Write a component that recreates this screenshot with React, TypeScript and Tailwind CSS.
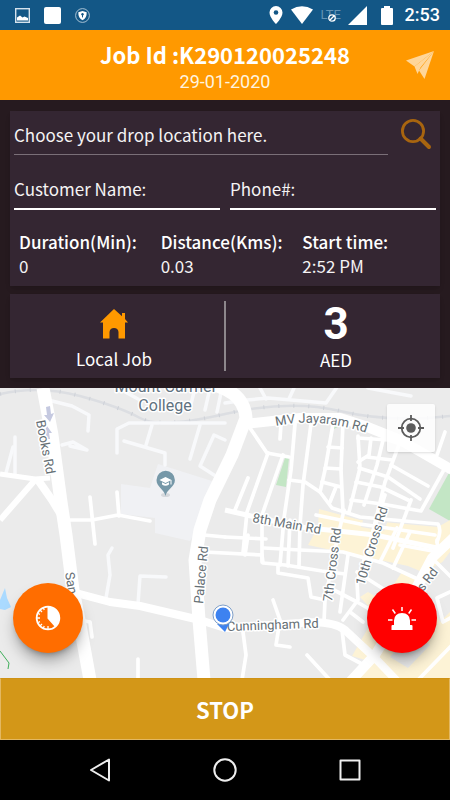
import React, { useState } from 'react';

const font = "font-['Noto_Sans_CJK_SC','Open_Sans',sans-serif]";

const mainRoads = [
  { d: 'M43 388 L52 435 L61 502 L66 535 L73 590 L80 625 L90 680', w: 13 },
  { d: 'M200 382 Q244 388 246 418 L232 455 L210 500 L200 530 L195 560 L199 620 L204 680', w: 13 },
  { d: 'M244 424 L300 418 L340 418 L365 426 L400 440 L452 470', w: 10 },
  { d: 'M76 593 L110 602 L140 606 L200 620 L225 628 L300 623 Q332 620 345 630 L375 658 L398 682', w: 8 },
  { d: 'M454 537 L432 558 L415 590 L375 655 L348 684', w: 10 },
  { d: 'M0 474 L35 479 L50 478', w: 5 },
  { d: 'M35 480 L0 520', w: 6 },
  { d: 'M38 480 L52 500 L63 518', w: 8 },
  { d: 'M225 510 L260 518 L300 527 L375 535 L437 548', w: 5 },
];

const streets = [
  'M70 520 L92 520 L118 515 L150 521',
  'M90 497 L95 544',
  'M117 492 L119 516',
  'M138 659 L138 680',
  'M204 535 L225 537',
  'M204 552 L262 555 L263 563 L285 565 L322 571 L345 574',
  'M85 621 L90 622 L92 637',
  'M250 428 L267 453 L289 457',
  'M268 453 L247 512 L243 553',
  'M248 478 L235 510',
  'M283 455 L262 515 L262 562',
  'M295 424 L291 470 L284 518 L280 565',
  'M311 424 L303 485 L300 525 L299 566',
  'M333 424 L325 470 L320 492',
  'M343 422 L341 470 L343 512',
  'M281 424 L280 439',
  'M328 447 L342 448',
  'M325 468 L341 469',
  'M322 482 L341 487',
  'M289 480 L305 482 L320 492 L332 508 L360 517 L438 524 Q442 530 437 542',
  'M336 487 L330 502',
  'M358 436 L360 468 L349 512',
  'M358 438 L388 440 L400 444',
  'M371 438 L369 455 L358 462',
  'M383 440 L377 465 L364 505',
  'M400 442 L385 482 L372 535',
  'M367 457 L392 460',
  'M359 468 L388 477 L420 499',
  'M391 465 L428 486',
  'M356 482 L381 487 L408 500',
  'M351 500 L382 504 L421 511 L446 466',
  'M411 500 L393 548',
  'M445 432 L437 455',
  'M316 515 L360 524 L435 535',
  'M264 548 L300 550 L343 552 L383 563 L424 582',
  'M225 537 L266 539',
  'M278 566 L278 573 L308 578 L311 597 L325 600 L324 622',
  'M290 520 L288 566',
  'M248 535 L245 555',
  'M344 510 L336 545 L325 600',
  'M348 555 L340 612',
  'M385 495 L357 582 L358 600 L343 620',
  'M397 528 L380 562',
  'M410 532 L393 568',
  'M330 588 L357 602 L378 614',
  'M350 612 L363 622',
  'M357 572 L385 590 L400 605',
  'M342 630 L345 655 L362 664',
  'M307 655 L330 680',
  'M437 540 L438 552 L400 545',
  'M450 592 L437 598 L443 622 L450 618',
  'M434 560 L452 578',
  'M452 645 L418 680',
  'M376 655 L395 625',
  'M273 600 L280 620 L276 645 L290 647',
  'M243 632 L246 655 L242 680',
];

const lanes = [
  'M15 437 L15 474',
  'M13 447 L6 473',
  'M52 401 L72 406 L89 415 L88 431',
  'M62 445 L73 442 L87 450 L70 446',
  'M117 453 L117 429 L129 423 L225 423',
  'M124 441 L165 453 L165 465',
  'M152 425 L146 445',
  'M200 425 L190 459',
  'M225 440 L214 435 L200 466 L214 475',
  'M112 548 L108 555 L110 575 L106 598',
  'M166 577 L140 576 L138 604',
  'M225 403 L247 400 L268 398 L326 403 L342 380',
  'M260 388 L266 399',
  'M294 388 L289 399',
  'M368 388 L411 396',
  'M118 388 L138 399',
  'M195 388 L190 408',
  'M210 388 L205 410',
  'M222 388 L217 412',
];

function StatusBar() {
  return (
    <div className="flex h-[30px] items-center justify-between bg-[#135786] pl-[15px] pr-[10px] text-white">
      <div className="flex items-center gap-[14px]">
        <svg width="15" height="15" viewBox="0 0 15 15" fill="none">
          <rect x="0.7" y="0.7" width="13.6" height="13.6" stroke="#d5e2ec" strokeWidth="1.4" />
          <path d="M2 12.5V9.5L5 7.5L7.5 9.5L9.5 8.5L13 10V12.5Z" fill="white" />
        </svg>
        <span className="h-[17px] w-[17px] rounded-xs bg-white" />
        <svg width="15" height="15" viewBox="0 0 15 15" fill="none">
          <circle cx="7.5" cy="7.5" r="6.9" stroke="#b8cddc" strokeWidth="0.9" />
          <path d="M3.3 4.3L7.5 3L11.7 4.3C11.9 8.3 10.3 10.8 7.5 12.3C4.7 10.8 3.1 8.3 3.3 4.3Z" fill="white" />
          <circle cx="7.5" cy="6.2" r="1.2" fill="#135786" />
          <path d="M7.5 6.5V9.4" stroke="#135786" strokeWidth="1" />
        </svg>
      </div>
      <div className="flex items-center">
        <svg width="14" height="18" viewBox="0 0 14 18">
          <path d="M7 0A6.5 6.5 0 0 0 .5 6.5C.5 11.5 7 18 7 18S13.5 11.5 13.5 6.5A6.5 6.5 0 0 0 7 0Z" fill="white" />
          <circle cx="7" cy="6.5" r="2.3" fill="#135786" />
        </svg>
        <svg className="ml-2" width="22" height="18" viewBox="0 0 22 18">
          <path d="M0 3.5Q11-3 22 3.5L11 18Z" fill="white" />
        </svg>
        <span className="relative ml-2 mt-1 w-[22px] self-start font-[Roboto,sans-serif] text-[13px] leading-[14px] text-[#6394b5]">
          LTE
          <svg className="absolute left-[7px] top-[6px]" width="8" height="8" viewBox="0 0 8 8" fill="#135786">
            <circle cx="4" cy="4" r="3.2" stroke="white" strokeWidth="1.3" />
            <path d="M1.8 6.2L6.2 1.8" stroke="white" strokeWidth="1.3" />
          </svg>
        </span>
        <svg className="ml-[5px]" width="19" height="19" viewBox="0 0 19 19">
          <path d="M19 0V19H0Z" fill="white" />
        </svg>
        <svg className="ml-[14px]" width="12" height="19" viewBox="0 0 12 19">
          <path d="M3 0H9V2H11Q12 2 12 3V18Q12 19 11 19H1Q0 19 0 18V3Q0 2 1 2H3Z" fill="white" />
        </svg>
        <span className="ml-3 font-[Roboto,sans-serif] text-[18px] font-medium leading-[22px]">2:53</span>
      </div>
    </div>
  );
}

function CityMap() {
  return (
    <svg
      className="absolute inset-0 h-full w-full font-[Roboto,sans-serif]"
      viewBox="0 388 450 290"
      preserveAspectRatio="xMidYMid slice"
      fill="none"
    >
      <defs>
        <path id="jayaram" d="M276 426 Q322 416 375 436" />
      </defs>
      <rect x="0" y="380" width="450" height="310" fill="#ebebeb" />

      {/* campus, parks and water */}
      <path d="M121 484L150 488L158 464L212 481L200 525L190 541L155 533L155 518L121 514Z" fill="#f0f1f4" />
      <path d="M285 458H289L286 487L276 485Z" fill="#c3e6c5" />
      <path d="M332 424L343 424L334 429Z" fill="#c3e6c5" />
      <path d="M450 471L429 509L450 521Z" fill="#c3e6c5" />
      <path d="M54 483L57 495L55 499Z" fill="#c3e6c5" />
      <path d="M5 588L0 600V609L5 610L11 607L7 598Z" fill="#aadaff" />
      <path d="M0 651L9 663L8 669" stroke="#3fae5a" strokeWidth="1" />

      {/* commercial areas */}
      <path d="M319 509L360 520L438 527L450 520V552L432 576L408 566L380 560L345 553L308 545L318 527Z" fill="#fdf3d6" />
      <path d="M402 572L425 580L410 605L390 590Z" fill="#fdf3d6" />
      <path d="M360 597L372 610L385 602L368 592Z" fill="#fdf3d6" />
      <path d="M368 628L352 656L372 662L350 684H450V560L430 578L415 610Z" fill="#fdf3d6" />
      <path d="M433 567L450 558V612L440 622L425 590Z" fill="#ebebeb" />
      <path d="M390 657L408 668L430 645L412 632Z" fill="#ebebeb" />
      <path d="M364 517L388 520L384 531L361 527Z" fill="#ebebeb" />

      {/* railway */}
      <path d="M0 394Q40 385 80 396T140 418T225 414T340 411T450 416" stroke="#dcdee2" strokeWidth="2.5" />
      <path d="M0 394Q40 385 80 396T140 418T225 414T340 411T450 416" stroke="#cfd2d8" strokeWidth="4" strokeDasharray="1 14" />

      <g stroke="#f8f9fb" strokeWidth="3.5" strokeLinecap="round" strokeLinejoin="round">
        {lanes.map((d) => <path key={d} d={d} />)}
      </g>
      <g stroke="#ffffff" strokeWidth="3.7" strokeLinecap="round" strokeLinejoin="round">
        {streets.map((d) => <path key={d} d={d} />)}
      </g>
      <g stroke="#ffffff" strokeLinejoin="round">
        {mainRoads.map((road) => <path key={road.d} d={road.d} strokeWidth={road.w} />)}
      </g>

      <g fill="#c5c9e0">
        <path d="M46 407L50 406L51 414L54 413L50 422L44 415L47 415Z" />
        <path d="M46 439L50 439L49 433L52 433L47 426L43 434L46 434Z" />
      </g>

      {/* labels */}
      <g fill="#5f7280" stroke="#ffffff" strokeWidth="3" strokeLinejoin="round" paintOrder="stroke" fontSize="16">
        <text x="165" y="392" textAnchor="middle">Mount Carmel</text>
        <text x="165" y="411" textAnchor="middle">College</text>
      </g>
      <g fill="#666f75" stroke="#ffffff" strokeWidth="3" strokeLinejoin="round" paintOrder="stroke" fontSize="13">
        <text transform="translate(36 421) rotate(79)">Books Rd</text>
        <text><textPath href="#jayaram">MV Jayaram Rd</textPath></text>
        <text transform="translate(252 522) rotate(10)">8th Main Rd</text>
        <text transform="translate(203 604) rotate(-85)">Palace Rd</text>
        <text transform="translate(332 602) rotate(-83)">7th Cross Rd</text>
        <text transform="translate(364 586) rotate(-73)">10th Cross Rd</text>
        <text transform="translate(65 573) rotate(80)">San</text>
        <text transform="translate(423 592) rotate(-52)">s Rd</text>
        <text transform="translate(227 631) rotate(-2)">Cunningham Rd</text>
      </g>

      {/* college pin */}
      <ellipse cx="165.5" cy="495" rx="4.5" ry="2" fill="#d5d8dc" />
      <path d="M165.5 496C164 489 156.5 487 156.5 480A9.2 9.2 0 0 1 174.9 480C174.9 487 167 489 165.5 496Z" fill="#7698a8" />
      <path d="M159.5 480L165.5 477L171.5 480L165.5 483Z M162 482.3L165.5 484L169 482.3V484.5Q165.5 487 162 484.5Z" fill="white" />
      <path d="M171 480V484.5" stroke="white" strokeWidth="1" />

      {/* current position */}
      <path d="M217 624L229 624L225 632Z" fill="#3d82f0" />
      <circle cx="223" cy="615" r="10" fill="white" stroke="#7e9fc9" strokeWidth="1" />
      <circle cx="223" cy="615" r="7.5" fill="#3d82f0" />
    </svg>
  );
}

export default function App() {
  const [drop, setDrop] = useState('');
  const [customer, setCustomer] = useState('');
  const [phone, setPhone] = useState('');

  const stats = [
    { label: 'Duration(Min):', value: '0' },
    { label: 'Distance(Kms):', value: '0.03' },
    { label: 'Start time:', value: '2:52 PM' },
  ];

  return (
    <div className={`flex min-h-screen flex-col bg-[#261a1f] text-white ${font}`}>
      <StatusBar />

      <header className="relative flex h-[70px] flex-col items-center bg-[#ff9900] pt-2">
        <h1 className="text-[22px] font-bold leading-8">Job Id :K290120025248</h1>
        <p className="font-[Roboto,sans-serif] text-[18px] leading-6 text-[#fff3df]">29-01-2020</p>
        <button type="button" aria-label="Send" className="absolute right-4 top-5">
          <svg width="28" height="30" viewBox="0 0 28 30" fill="#ffd699">
            <path d="M0 10.5L28 1L8.5 16.5Z" />
            <path d="M28 1L18.5 29L13 20.5Z" />
            <path d="M28 1L8.5 16.5L11.5 24L14.5 17.5Z" />
          </svg>
        </button>
      </header>

      <main className="flex flex-col gap-2 px-[10px] pb-[10px] pt-[11px]">
        <section className="bg-[#342632] px-1 pb-2 shadow-md">
          <div className="flex items-start justify-between">
            <input
              type="text"
              aria-label="Drop location"
              placeholder="Choose your drop location here."
              value={drop}
              onChange={(e) => setDrop(e.target.value)}
              className="mr-3 h-11 min-w-0 flex-1 border-b border-[#7a6f78] bg-transparent pt-1 text-[17px] outline-none placeholder:text-[#f5f3f4]"
            />
            <button type="button" aria-label="Search" className="mr-1 mt-2">
              <svg width="32" height="32" viewBox="0 0 32 32" fill="none" stroke="#a8650f">
                <circle cx="13" cy="12" r="10.6" strokeWidth="2.8" />
                <path d="M20.5 19.5L29 28" strokeWidth="4" strokeLinecap="round" />
              </svg>
            </button>
          </div>

          <div className="flex gap-[10px]">
            <div className="flex h-[55px] min-w-0 flex-1 items-end border-b-2 border-white pb-[6px] text-[17px] leading-[26px] text-[#f5f3f4]">
              <label htmlFor="customer">Customer Name:</label>
              <input
                id="customer"
                type="text"
                value={customer}
                onChange={(e) => setCustomer(e.target.value)}
                className="ml-2 h-[26px] min-w-0 flex-1 bg-transparent outline-none"
              />
            </div>
            <div className="flex h-[55px] min-w-0 flex-1 items-end border-b-2 border-white pb-[6px] text-[17px] leading-[26px] text-[#f5f3f4]">
              <label htmlFor="phone">Phone#:</label>
              <input
                id="phone"
                type="tel"
                value={phone}
                onChange={(e) => setPhone(e.target.value)}
                className="ml-2 h-[26px] min-w-0 flex-1 bg-transparent outline-none"
              />
            </div>
          </div>

          <dl className="mt-5 grid grid-cols-3 gap-x-2 pl-[5px] text-[17px] leading-6">
            {stats.map((stat) => (
              <div key={stat.label}>
                <dt className="font-medium">{stat.label}</dt>
                <dd className="text-[#f5f3f4]">{stat.value}</dd>
              </div>
            ))}
          </dl>
        </section>

        <section className="flex items-center bg-[#342632] py-[6px] shadow-md">
          <div className="flex flex-1 flex-col items-center gap-2 pr-[6px] pt-2">
            <svg width="28" height="30" viewBox="0 0 28 30" fill="#ff9900">
              <path d="M14 0L22 7.3V4H25V10L28 13.5H25V29.5H18.5V23Q18 19 14 19T9.5 23V29.5H3V13.5H0Z" />
            </svg>
            <span className="text-[17px] leading-6">Local Job</span>
          </div>
          <div className="h-[70px] w-[2px] bg-[#8d878c]" />
          <div className="flex flex-1 flex-col items-center pl-[6px]">
            <span className="font-[Roboto,sans-serif] text-[44px] font-bold leading-[48px]">3</span>
            <span className="text-[17px] leading-6">AED</span>
          </div>
        </section>
      </main>

      <section className="relative flex min-h-72 flex-1 flex-col justify-between overflow-hidden">
        <CityMap />
        <button
          type="button"
          aria-label="My location"
          className="relative mr-[15px] mt-4 flex h-12 w-12 items-center justify-center self-end rounded-xs bg-white/85 shadow-sm"
        >
          <svg width="26" height="26" viewBox="0 0 26 26" fill="none" stroke="#5c5c5c">
            <circle cx="13" cy="13" r="9.3" strokeWidth="1.8" />
            <path d="M13 0V6M13 20V26M0 13H6M20 13H26" strokeWidth="1.8" />
            <circle cx="13" cy="13" r="4.8" fill="#5c5c5c" stroke="none" />
          </svg>
        </button>
        <div className="relative flex justify-between px-[13px] pb-[25px]">
          <button
            type="button"
            aria-label="Waiting time"
            className="flex h-[70px] w-[70px] items-center justify-center rounded-full bg-[#ff6d00] shadow-lg shadow-black/35"
          >
            <svg width="26" height="26" viewBox="0 0 26 26" fill="none">
              <circle cx="13" cy="13" r="11.4" stroke="white" strokeWidth="1.7" />
              <path d="M12.5 1.5V13.5L20 22A11.4 11.4 0 0 0 12.5 1.5Z" fill="white" />
              <path d="M2 13H5M13 24V21M5 5L7 7M5 21L7 19M3 8.5L5 9.4M3 17.5L5 16.6M8.5 3L9.2 5M8.5 23L9.2 21" stroke="white" strokeWidth="1.3" />
            </svg>
          </button>
          <button
            type="button"
            aria-label="Emergency"
            className="flex h-[70px] w-[70px] items-center justify-center rounded-full bg-[#ff0000] shadow-lg shadow-black/35"
          >
            <svg width="28" height="23" viewBox="0 0 28 23" fill="none">
              <path d="M6 18V13.5Q6.5 6 14 6T22 13.5V18H23.5Q24.5 18 24.5 19V23H3.5V19Q3.5 18 4.5 18Z" fill="white" />
              <path d="M14 0V4M4.5 2.5L7.3 6.5M23.5 2.5L20.7 6.5M0 13H4.5M23.5 13H28" stroke="white" strokeWidth="1.5" />
            </svg>
          </button>
        </div>
      </section>

      <button
        type="button"
        className="h-[62px] w-full border border-[#e3b862] border-t-[#cf9214] bg-[#d39718] text-[22px] font-bold leading-8"
      >
        STOP
      </button>

      <nav className="flex h-[60px] items-center justify-around bg-black px-[38px]">
        <button type="button" aria-label="Back">
          <svg width="24" height="24" viewBox="0 0 24 24" fill="none" stroke="#eeeeee" strokeWidth="2" strokeLinejoin="round">
            <path d="M21 1.5V22.5L3 12Z" />
          </svg>
        </button>
        <button type="button" aria-label="Home">
          <svg width="24" height="24" viewBox="0 0 24 24" fill="none" stroke="#eeeeee" strokeWidth="2">
            <circle cx="12" cy="12" r="10.7" />
          </svg>
        </button>
        <button type="button" aria-label="Recent apps">
          <svg width="24" height="24" viewBox="0 0 24 24" fill="none" stroke="#eeeeee" strokeWidth="2" strokeLinejoin="round">
            <rect x="2.5" y="2.5" width="19" height="19" />
          </svg>
        </button>
      </nav>
    </div>
  );
}
